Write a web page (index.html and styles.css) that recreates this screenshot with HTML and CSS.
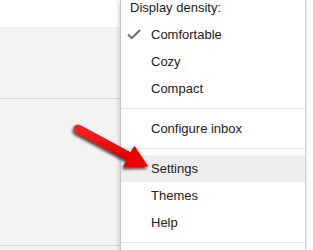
FILE: index.html
```html
<!DOCTYPE html>
<html>
<head>
<meta charset="utf-8">
<link rel="stylesheet" href="styles.css">
</head>
<body>
<div class="page">
  <div class="side">
    <div class="side-top"></div>
    <div class="side-block side-block-a"></div>
    <div class="side-block side-block-b"></div>
    <div class="side-rest"></div>
  </div>
  <div class="menu">
    <div class="menu-header">Display density:</div>
    <div class="item checked">
      <svg class="check" width="14" height="11" viewBox="0 0 14 11"><path d="M1 5.5 L4.8 9.2 L13 1" fill="none" stroke="#6a6a6a" stroke-width="2"/></svg>
      Comfortable
    </div>
    <div class="item">Cozy</div>
    <div class="item">Compact</div>
    <div class="sep"></div>
    <div class="item">Configure inbox</div>
    <div class="sep"></div>
    <div class="item hover">Settings</div>
    <div class="item">Themes</div>
    <div class="item">Help</div>
    <div class="sep"></div>
  </div>
  <div class="edge"></div>
  <svg class="arrow" width="313" height="250" viewBox="0 0 313 250">
    <defs>
      <filter id="sh" x="-20%" y="-20%" width="140%" height="140%">
        <feDropShadow dx="-1" dy="2" stdDeviation="1.6" flood-color="#000" flood-opacity="0.75"/>
      </filter>
      <linearGradient id="rg" x1="0" y1="0" x2="0" y2="1">
        <stop offset="0" stop-color="#ff2020"/>
        <stop offset="1" stop-color="#dd0000"/>
      </linearGradient>
    </defs>
    <g filter="url(#sh)">
      <line x1="78" y1="129" x2="132" y2="158" stroke="url(#rg)" stroke-width="9" stroke-linecap="round"/>
      <polygon points="147,166 124.2,166.4 134.4,147" fill="#ea0000" stroke="#ea0000" stroke-width="1.5" stroke-linejoin="round"/>
    </g>
  </svg>
</div>
</body>
</html>
```
FILE: styles.css
```css
html, body {
  margin: 0;
  padding: 0;
  background: #fff;
}
.page {
  position: relative;
  width: 313px;
  height: 250px;
  overflow: hidden;
  display: flex;
  font-family: "Liberation Sans", Arial, sans-serif;
  font-size: 13px;
  color: #222;
}
.side {
  width: 120px;
  flex: none;
  display: flex;
  flex-direction: column;
}
.side-top {
  height: 27px;
  background: #fff;
}
.side-block {
  background: #f3f3f3;
  border-bottom: 1px solid #dcdcdc;
}
.side-block-a {
  height: 71px;
}
.side-block-b {
  height: 146px;
}
.side-rest {
  flex: 1;
  background: #f3f3f3;
}
.menu {
  width: 184px;
  flex: none;
  background: #fff;
  border-left: 1px solid #c8c8c8;
  border-right: 1px solid #cfcfcf;
  box-shadow: -1px 2px 4px rgba(0,0,0,0.18);
  position: relative;
  z-index: 1;
}
.menu-header {
  line-height: 15px;
  padding: 0 0 6px 9px;
}
.item {
  position: relative;
  height: 27px;
  line-height: 27px;
  padding-left: 30px;
  white-space: nowrap;
}
.item.hover {
  background: #eeeeee;
}
.check {
  position: absolute;
  left: 6px;
  top: 8px;
}
.sep {
  height: 1px;
  margin: 6px 0;
  background: #e6e6e6;
}
.edge {
  flex: 1;
  background: #fcfcfc;
}
.arrow {
  position: absolute;
  left: 0;
  top: 0;
  z-index: 2;
}
```
